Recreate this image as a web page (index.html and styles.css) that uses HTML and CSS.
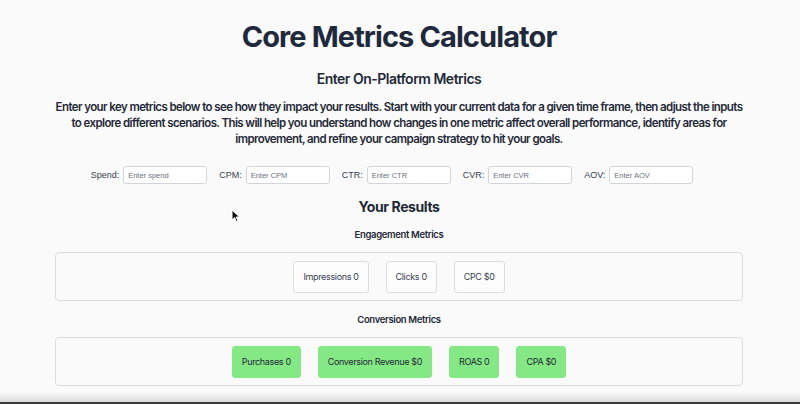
FILE: index.html
```html
<!DOCTYPE html>
<html lang="en">
<head>
<meta charset="utf-8">
<title>Core Metrics Calculator</title>
<link rel="stylesheet" href="styles.css">
</head>
<body>
<main class="page">
  <h1 class="title">Core Metrics Calculator</h1>
  <h2 class="subtitle">Enter On-Platform Metrics</h2>
  <p class="intro">Enter your key metrics below to see how they impact your results. Start with your current data for a given time frame, then adjust the inputs to explore different scenarios. This will help you understand how changes in one metric affect overall performance, identify areas for improvement, and refine your campaign strategy to hit your goals.</p>

  <div class="inputs">
    <label class="field"><span class="field-label">Spend:</span><input class="field-input" type="text" placeholder="Enter spend"></label>
    <label class="field"><span class="field-label">CPM:</span><input class="field-input" type="text" placeholder="Enter CPM"></label>
    <label class="field"><span class="field-label">CTR:</span><input class="field-input" type="text" placeholder="Enter CTR"></label>
    <label class="field"><span class="field-label">CVR:</span><input class="field-input" type="text" placeholder="Enter CVR"></label>
    <label class="field"><span class="field-label">AOV:</span><input class="field-input" type="text" placeholder="Enter AOV"></label>
  </div>

  <h2 class="results-title">Your Results</h2>

  <h3 class="group-title">Engagement Metrics</h3>
  <div class="group">
    <div class="metric">Impressions 0</div>
    <div class="metric">Clicks 0</div>
    <div class="metric">CPC $0</div>
  </div>

  <h3 class="group-title">Conversion Metrics</h3>
  <div class="group">
    <div class="metric metric-green">Purchases 0</div>
    <div class="metric metric-green">Conversion Revenue $0</div>
    <div class="metric metric-green">ROAS 0</div>
    <div class="metric metric-green">CPA $0</div>
  </div>
</main>
<svg class="cursor" width="10" height="14" viewBox="0 0 10 14"><path d="M1 1 L1 11 L3.5 8.6 L5.4 12.8 L7 12 L5.2 8 L8.6 8 Z" fill="#111" stroke="#fff" stroke-width="1"/></svg>
<div class="bottom-shade"></div>
</body>
</html>
```

FILE: styles.css
```css
* { box-sizing: border-box; }

html, body {
  margin: 0;
  padding: 0;
  background: #fafafa;
  color: #1f2937;
  font-family: Inter, "Noto Sans", sans-serif;
}

.page {
  padding: 19px 57px 0 55px;
  display: flex;
  flex-direction: column;
  align-items: stretch;
}

.title {
  margin: 0;
  text-align: center;
  font-size: 29px;
  line-height: 36px;
  font-weight: 700;
  letter-spacing: -0.9px;
  color: #1e293b;
}

.subtitle {
  margin: 14px 0 0;
  text-align: center;
  font-size: 14px;
  line-height: 20px;
  font-weight: 600;
  letter-spacing: -0.5px;
}

.intro {
  margin: 10px -2px 0;
  text-align: center;
  font-size: 11.5px;
  line-height: 16px;
  font-weight: 600;
  letter-spacing: -0.6px;
}

.inputs {
  margin-top: 19px;
  padding-right: 14px;
  display: flex;
  justify-content: center;
  gap: 12px;
}

.field {
  display: flex;
  align-items: center;
  gap: 4px;
}

.field-label {
  font-family: "Liberation Sans", Arial, sans-serif;
  font-size: 9px;
  color: #374151;
}

.field-input {
  width: 84px;
  height: 18px;
  padding: 0 4px;
  border: 1px solid #d1d5db;
  border-radius: 3px;
  background: #fff;
  font-family: "Liberation Sans", Arial, sans-serif;
  font-size: 7.5px;
  color: #374151;
}

.field-input::placeholder { color: #6b7280; }

.results-title {
  margin: 13px 0 0;
  text-align: center;
  font-size: 14px;
  line-height: 20px;
  font-weight: 700;
  letter-spacing: -0.4px;
}

.group-title {
  margin: 11px 0 0;
  text-align: center;
  font-size: 9.5px;
  line-height: 14px;
  font-weight: 600;
  letter-spacing: -0.35px;
}

.group {
  margin-top: 10px;
  height: 49px;
  border: 1px solid #dcdcdc;
  border-radius: 4px;
  display: flex;
  justify-content: center;
  align-items: center;
  gap: 17px;
}

.group + .group-title { margin-top: 12px; }

.metric {
  height: 32px;
  padding: 0 9px;
  display: flex;
  align-items: center;
  border: 1px solid #dddddd;
  border-radius: 3px;
  background: #fdfdfd;
  font-size: 9px;
  letter-spacing: -0.35px;
  color: #374151;
}

.metric-green {
  background: #84e884;
  border-color: #84e884;
  color: #1f2937;
}

.cursor {
  position: absolute;
  left: 231px;
  top: 209px;
}

.bottom-shade {
  position: fixed;
  left: 0;
  right: 0;
  bottom: 0;
  height: 12px;
  background: linear-gradient(to bottom, rgba(0,0,0,0), rgba(0,0,0,0.12));
  border-bottom: 2px solid #3a3a3a;
}
```
